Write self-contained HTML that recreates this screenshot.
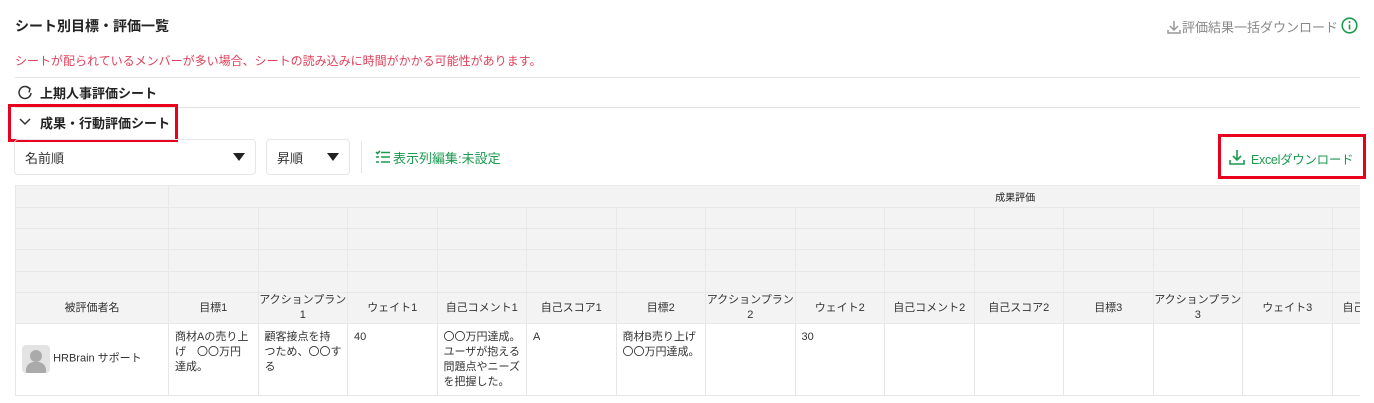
<!DOCTYPE html>
<html><head><meta charset="utf-8"><style>
*{box-sizing:border-box;margin:0;padding:0}
body{width:1374px;height:403px;overflow:hidden;background:#fff;font-family:"Liberation Sans","Noto Sans CJK JP",sans-serif;color:#222;position:relative}
.a{position:absolute}
.title{left:15px;top:16px;font-size:14px;font-weight:bold}
.warn{left:15px;top:52px;font-size:12px;color:#e0405a}
.hr{left:15px;width:1345px;height:1px;background:#e3e3e3}
.sec{font-size:13px;font-weight:bold}
.red{border:3px solid #e8001c}
.sel{border:1px solid #e6e6e6;border-radius:4px;height:36px;font-size:13px;padding:8px 10px;color:#333}
.tri{position:absolute;right:10px;top:13px;width:0;height:0;border-left:6px solid transparent;border-right:6px solid transparent;border-top:8px solid #222}
.wrap{left:15px;top:185px;width:1345px;height:212px;overflow:hidden}
table{border-collapse:collapse;table-layout:fixed;font-size:11px}
td{border:1px solid #e6e6e6;vertical-align:top;overflow:hidden}
.h td{background:#f3f3f3;border-color:#e8e8e8}
.lab td{text-align:center;vertical-align:middle;line-height:15px;font-size:11px;color:#333}
.d td{padding:0;color:#333}
.d td div{height:71px;padding:6px 6px;line-height:15px;white-space:nowrap;overflow:hidden}
</style></head><body>
<div class="a title">シート別目標・評価一覧</div>
<div class="a" style="left:1166px;top:17px;font-size:13px;color:#888">
<svg width="16" height="16" viewBox="0 0 16 16" style="vertical-align:-3px"><path d="M8 2v9M4 7l4 4 4-4M2 11v3h12v-3" fill="none" stroke="#999" stroke-width="1.5"/></svg>評価結果一括ダウンロード</div>
<svg class="a" style="left:1341px;top:17px" width="17" height="17" viewBox="0 0 17 17"><circle cx="8.5" cy="8.5" r="7.3" fill="none" stroke="#1c9a50" stroke-width="1.6"/><circle cx="8.5" cy="5" r="1" fill="#1c9a50"/><path d="M8.5 7.5v5" stroke="#1c9a50" stroke-width="1.6"/></svg>
<div class="a warn">シートが配られているメンバーが多い場合、シートの読み込みに時間がかかる可能性があります。</div>
<div class="a hr" style="top:77px"></div>
<svg class="a" style="left:17px;top:84px" width="16" height="16" viewBox="0 0 16 16"><path d="M12.5 4.5A6 6 0 1 0 14 9" fill="none" stroke="#333" stroke-width="1.5"/><path d="M9 2.5l4 2-1 4" fill="none" stroke="#333" stroke-width="1.5"/></svg>
<div class="a sec" style="left:40px;top:83px">上期人事評価シート</div>
<div class="a hr" style="top:107px"></div>
<div class="a red" style="left:8px;top:104px;width:170px;height:38px"></div>
<svg class="a" style="left:18px;top:117px" width="14" height="10" viewBox="0 0 14 10"><path d="M2 2l5 5 5-5" fill="none" stroke="#333" stroke-width="1.5"/></svg>
<div class="a sec" style="left:40px;top:113px">成果・行動評価シート</div>
<div class="a sel" style="left:14px;top:139px;width:242px">名前順<span class="tri"></span></div>
<div class="a sel" style="left:266px;top:139px;width:84px">昇順<span class="tri"></span></div>
<div class="a" style="left:361px;top:141px;width:1px;height:32px;background:#e3e3e3"></div>
<svg class="a" style="left:375px;top:150px" width="16" height="14" viewBox="0 0 16 14"><path d="M1 2l1.5 1.5L5 1M6 2.5h9M1 7h3M6 7h9M1 12h3M6 12h9" fill="none" stroke="#1c9a50" stroke-width="1.6"/></svg>
<div class="a" style="left:393px;top:148px;font-size:13px;color:#1c9a50">表示列編集:未設定</div>
<div class="a red" style="left:1218px;top:134px;width:148px;height:45px"></div>
<svg class="a" style="left:1228px;top:148px" width="18" height="18" viewBox="0 0 18 18"><path d="M9 2v10M5 8l4 4 4-4M2 12v4h14v-4" fill="none" stroke="#1c9a50" stroke-width="1.6"/></svg>
<div class="a" style="left:1251px;top:149px;font-size:12.5px;color:#1c9a50;letter-spacing:-0.3px">Excelダウンロード</div>
<div class="a wrap"><table style="width:1406px">
<colgroup><col style="width:153px"><col span="14" style="width:89.5px"></colgroup>
<tr class="h" style="height:22px"><td></td><td colspan="14" style="text-align:center;font-size:10px;vertical-align:middle;padding-left:440px">成果評価</td></tr>
<tr class="h" style="height:21px"><td></td><td></td><td></td><td></td><td></td><td></td><td></td><td></td><td></td><td></td><td></td><td></td><td></td><td></td><td></td></tr>
<tr class="h" style="height:21px"><td></td><td></td><td></td><td></td><td></td><td></td><td></td><td></td><td></td><td></td><td></td><td></td><td></td><td></td><td></td></tr>
<tr class="h" style="height:22px"><td></td><td></td><td></td><td></td><td></td><td></td><td></td><td></td><td></td><td></td><td></td><td></td><td></td><td></td><td></td></tr>
<tr class="h" style="height:21px"><td></td><td></td><td></td><td></td><td></td><td></td><td></td><td></td><td></td><td></td><td></td><td></td><td></td><td></td><td></td></tr>
<tr class="h lab" style="height:31px"><td>被評価者名</td><td>目標1</td><td>アクションプラン<br>1</td><td>ウェイト1</td><td>自己コメント1</td><td>自己スコア1</td><td>目標2</td><td>アクションプラン<br>2</td><td>ウェイト2</td><td>自己コメント2</td><td>自己スコア2</td><td>目標3</td><td>アクションプラン<br>3</td><td>ウェイト3</td><td style="text-align:left;padding-left:10px">自己コ</td></tr>
<tr class="d"><td><div style="padding-top:21px"><span style="display:inline-block;width:28px;height:28px;background:#e3e3e3;border-radius:4px;vertical-align:middle;position:relative;overflow:hidden"><span style="position:absolute;left:8px;top:5px;width:12px;height:12px;border-radius:50%;background:#aaa"></span><span style="position:absolute;left:4px;top:17px;width:20px;height:14px;border-radius:8px 8px 0 0;background:#aaa"></span></span> <span style="vertical-align:middle">HRBrain サポート</span></div></td><td><div>商材Aの売り上<br>げ　〇〇万円<br>達成。</div></td><td><div>顧客接点を持<br>つため、〇〇す<br>る</div></td><td><div>40</div></td><td><div>〇〇万円達成。<br>ユーザが抱える<br>問題点やニーズ<br>を把握した。</div></td><td><div>A</div></td><td><div>商材B売り上げ<br>〇〇万円達成。</div></td><td><div></div></td><td><div>30</div></td><td><div></div></td><td><div></div></td><td><div></div></td><td><div></div></td><td><div></div></td><td><div></div></td></tr>
</table></div>
</body></html>
